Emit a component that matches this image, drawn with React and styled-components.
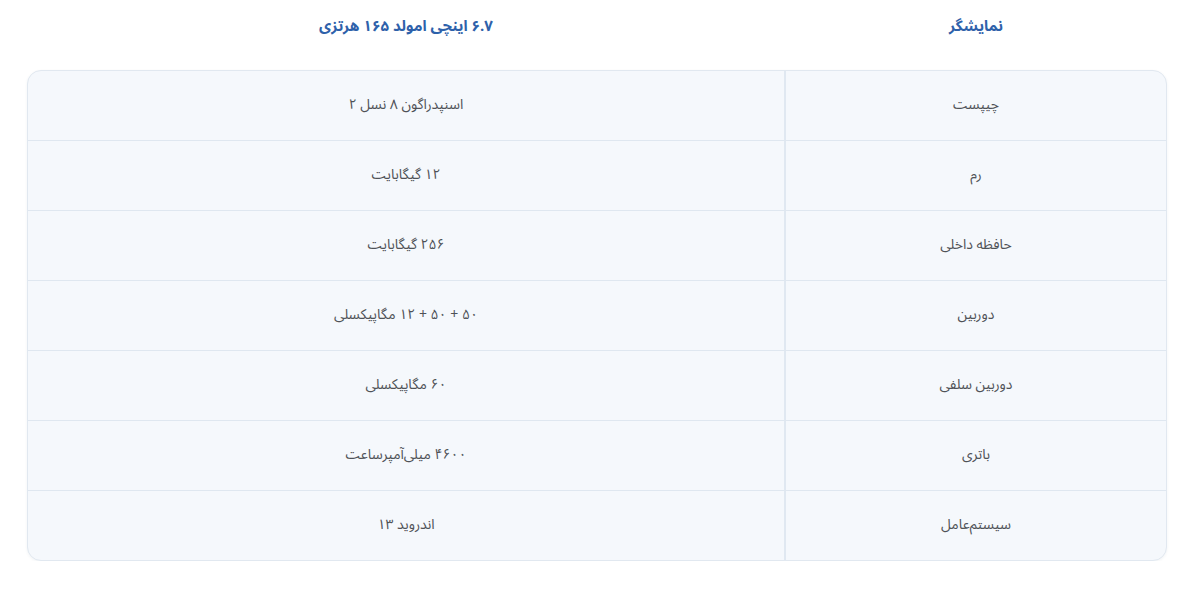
import React from 'react';
import styled, { createGlobalStyle } from 'styled-components';

const GlobalStyle = createGlobalStyle`
  html, body {
    margin: 0;
    padding: 0;
    background: #ffffff;
  }
  body {
    font-family: "Noto Sans Arabic", "DejaVu Sans", "Noto Sans", sans-serif;
  }
`;

const specs = [
  ['چیپست', 'اسنپدراگون ۸ نسل ۲'],
  ['رم', '۱۲ گیگابایت'],
  ['حافظه داخلی', '۲۵۶ گیگابایت'],
  ['دوربین', '۵۰ + ۵۰ + ۱۲ مگاپیکسلی'],
  ['دوربین سلفی', '۶۰ مگاپیکسلی'],
  ['باتری', '۴۶۰۰ میلی‌آمپرساعت'],
  ['سیستم‌عامل', 'اندروید ۱۳'],
];

const App = () => {
  return (
    <>
      <GlobalStyle />
      <Page dir='rtl'>
        <HeadRow>
          <HeadCell>نمایشگر</HeadCell>
          <HeadCell>۶.۷ اینچی امولد ۱۶۵ هرتزی</HeadCell>
        </HeadRow>
        <Table>
          {specs.map(([label, value], i) => (
            <Row key={label} last={i === specs.length - 1}>
              <LabelCell>{label}</LabelCell>
              <ValueCell>{value}</ValueCell>
            </Row>
          ))}
        </Table>
      </Page>
    </>
  );
};

const Page = styled.div`
  width: 1140px;
  margin-left: 27px;
  padding-top: 0;
`;

const HeadRow = styled.div`
  display: grid;
  grid-template-columns: 382px 1fr;
  height: 70px;
  align-items: center;
  padding-bottom: 0;
`;

const HeadCell = styled.div`
  text-align: center;
  color: #2e61aa;
  font-size: 15px;
  font-weight: 700;
  margin-top: -18px;
`;

const Table = styled.div`
  background: #f5f8fc;
  border: 1px solid #e1e8f0;
  border-radius: 14px;
  overflow: hidden;
  box-shadow: 0 1px 3px rgba(30, 60, 110, 0.06);
`;

const Row = styled.div`
  display: grid;
  grid-template-columns: 382px 1fr;
  height: 69px;
  border-bottom: ${(p) => (p.last ? 'none' : '1px solid #dfe7f0')};
`;

const Cell = styled.div`
  display: flex;
  align-items: center;
  justify-content: center;
  font-size: 14px;
  color: #4f5257;
  padding-bottom: 2px;
`;

const LabelCell = styled(Cell)`
  border-left: 2px solid #e0e8f1;
`;

const ValueCell = styled(Cell)``;

export default App;
